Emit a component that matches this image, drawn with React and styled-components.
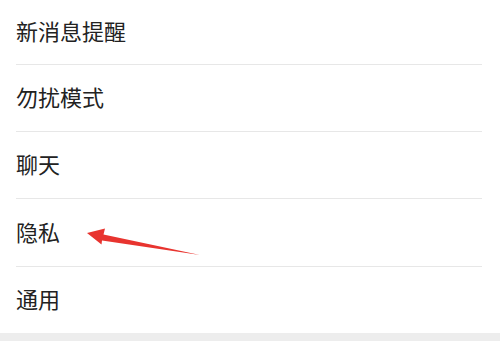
import React from "react";
import styled, { createGlobalStyle } from "styled-components";

const GlobalStyle = createGlobalStyle`
  html, body {
    margin: 0;
    padding: 0;
    background: #ffffff;
  }
  body {
    font-family: "Noto Sans CJK SC", "Noto Sans", sans-serif;
  }
`;

const items = [
  { label: "新消息提醒", height: 64 },
  { label: "勿扰模式", height: 66 },
  { label: "聊天", height: 66 },
  { label: "隐私", height: 67, arrow: true },
  { label: "通用", height: 66, last: true },
];

const App = () => {
  return (
    <>
      <GlobalStyle />
      <Page>
        <List>
          {items.map((item) => (
            <Row key={item.label}>
              <RowInner $h={item.height} $last={item.last}>
                <Label>{item.label}</Label>
                {item.arrow ? (
                  <Arrow viewBox="0 0 130 40" width="130" height="40">
                    <path
                      d="M7 8 L25 3.5 L23.5 9.5 L120 30 L22 15.5 L21.5 19.5 Z"
                      fill="#e8342f"
                    />
                  </Arrow>
                ) : null}
              </RowInner>
            </Row>
          ))}
        </List>
        <Footer />
      </Page>
    </>
  );
};

const Page = styled.div`
  width: 500px;
  height: 341px;
  overflow: hidden;
  background: #ffffff;
  display: flex;
  flex-direction: column;
`;

const List = styled.div`
  display: flex;
  flex-direction: column;
`;

const Row = styled.div`
  padding-left: 16px;
  padding-right: 18px;
  background: #ffffff;
`;

const RowInner = styled.div`
  position: relative;
  box-sizing: border-box;
  height: ${(p) => p.$h + (p.$last ? 0 : 1)}px;
  padding-bottom: 4px;
  display: flex;
  align-items: center;
  border-bottom: ${(p) => (p.$last ? "none" : "1px solid #e7e7e7")};
`;

const Label = styled.span`
  font-size: 22px;
  font-weight: 400;
  color: #222222;
  line-height: 1;
`;

const Arrow = styled.svg`
  position: absolute;
  left: 64px;
  top: 26px;
`;

const Footer = styled.div`
  flex: 1;
  background: #ededed;
`;

export default App;
